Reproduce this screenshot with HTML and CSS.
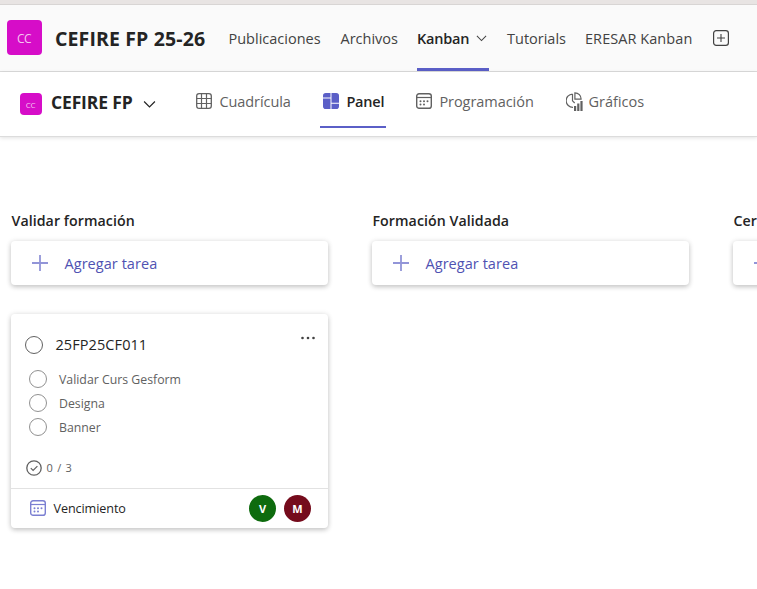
FILE: index.html
```html
<!DOCTYPE html>
<html lang="es">
<head>
<meta charset="utf-8">
<title>CEFIRE FP 25-26</title>
<link rel="stylesheet" href="styles.css">
</head>
<body>
<svg width="0" height="0" class="defs">
  <symbol id="chevron" viewBox="0 0 12 12"><path d="M1 3.2l5 5 5-5" fill="none" stroke="currentColor" stroke-width="1.1"/></symbol>
  <symbol id="calendar" viewBox="0 0 16 16">
    <rect x=".7" y=".7" width="14.6" height="14.6" rx="2.4" fill="none" stroke="currentColor" stroke-width="1.4"/>
    <path d="M.6 4.5h14.8" stroke="currentColor" stroke-width="1.2"/>
    <g fill="currentColor"><circle cx="4.5" cy="8.2" r="1"/><circle cx="8" cy="8.2" r="1"/><circle cx="11.5" cy="8.2" r="1"/><circle cx="4.5" cy="11.4" r="1"/><circle cx="8" cy="11.4" r="1"/></g>
  </symbol>
  <symbol id="plus" viewBox="0 0 16 16"><path d="M8 0v16M0 8h16" stroke="currentColor" stroke-width="1.8"/></symbol>
</svg>
<div class="strip"></div>
<header class="team">
  <div class="logo">CC</div>
  <h1>CEFIRE FP 25-26</h1>
  <nav class="tabs">
    <a class="t-pub">Publicaciones</a>
    <a class="t-arc">Archivos</a>
    <a class="t-kan active"><span>Kanban</span><svg class="chev-s"><use href="#chevron"/></svg></a>
    <a class="t-tut">Tutorials</a>
    <a class="t-ere">ERESAR Kanban</a>
  </nav>
  <svg class="add-tab" viewBox="0 0 16 16"><rect x=".6" y=".6" width="14.8" height="14.8" rx="2.6" fill="none" stroke="currentColor" stroke-width="1.2"/><path d="M8 4v8M4 8h8" stroke="currentColor" stroke-width="1.1"/></svg>
</header>
<section class="plan">
  <div class="logo small">CC</div>
  <h2>CEFIRE FP</h2>
  <svg class="chev"><use href="#chevron"/></svg>
  <nav class="views">
    <a class="v-grid"><svg viewBox="0 0 16 16"><rect x=".7" y=".7" width="14.6" height="14.6" rx="2.4" fill="none" stroke="currentColor" stroke-width="1.3"/><path d="M5.5.6v14.8M10.5.6v14.8M.6 5.5h14.8M.6 10.5h14.8" stroke="currentColor" stroke-width="1.2"/></svg><span>Cuadrícula</span></a>
    <a class="v-board active"><svg viewBox="0 0 16 16"><path d="M2.8 0H7.5V4.6H0V2.8A2.8 2.8 0 0 1 2.8 0zM0 5.6H7.5V16H2.8A2.8 2.8 0 0 1 0 13.2zM8.5 0h4.7A2.8 2.8 0 0 1 16 2.8V9.8H8.5zM8.5 10.8H16v2.4a2.8 2.8 0 0 1-2.8 2.8H8.5z" fill="currentColor"/></svg><span>Panel</span></a>
    <a class="v-cal"><svg><use href="#calendar"/></svg><span>Programación</span></a>
    <a class="v-chart"><svg viewBox="0 0 17 19"><path d="M6.5 2.1A6.6 6.6 0 0 0 7 15.3M6.5 2v6.8l2.2 2.2M8.9.8a6.2 6.2 0 0 1 6.2 6.4H8.9z" fill="none" stroke="currentColor" stroke-width="1.2"/><path d="M8 14h2.2v5H8zM11.2 11.5h2.2V19h-2.2zM14.4 9h2.2v10h-2.2z" fill="currentColor"/></svg><span>Gráficos</span></a>
  </nav>
</section>
<main class="board">
  <section class="bucket">
    <h3>Validar formación</h3>
    <button class="add"><svg><use href="#plus"/></svg><span>Agregar tarea</span></button>
    <article class="card">
      <div class="top"><i class="ring main"></i><span class="name">25FP25CF011</span>
        <svg class="more" viewBox="0 0 14 4"><g fill="currentColor"><circle cx="1.5" cy="2" r="1.3"/><circle cx="7" cy="2" r="1.3"/><circle cx="12.5" cy="2" r="1.3"/></g></svg></div>
      <ul>
        <li><i class="ring"></i><span>Validar Curs Gesform</span></li>
        <li><i class="ring"></i><span>Designa</span></li>
        <li><i class="ring"></i><span>Banner</span></li>
      </ul>
      <div class="progress"><svg viewBox="0 0 16 16" fill="none" stroke="currentColor"><circle cx="8" cy="8" r="7.2" stroke-width="1.3"/><path d="M4.8 8.2l2.3 2.3 4.3-4.3" stroke-width="1.2"/></svg><span>0 / 3</span></div>
      <footer><svg><use href="#calendar"/></svg><span class="due">Vencimiento</span><b class="avatar green">V</b><b class="avatar red">M</b></footer>
    </article>
  </section>
  <section class="bucket">
    <h3>Formación Validada</h3>
    <button class="add"><svg><use href="#plus"/></svg><span>Agregar tarea</span></button>
  </section>
  <section class="bucket">
    <h3>Cer</h3>
    <button class="add"><svg><use href="#plus"/></svg></button>
  </section>
</main>
</body>
</html>
```
FILE: styles.css
```css
* { box-sizing: border-box; }
html { overflow: hidden; }
body { margin: 0; width: 757px; height: 589px; overflow: hidden; background: #fff; color: #242424; font-family: "Open Sans", "Noto Sans", sans-serif; font-size: 14.5px; white-space: nowrap; display: flex; flex-direction: column; }
.defs { position: absolute; }
h1, h2, h3, ul { margin: 0; padding: 0; }
svg { display: block; flex: none; width: 16px; height: 16px; }
.strip { flex: none; height: 5px; background: #e8e4e3; border-bottom: 1px solid #d8d5d4; }
.team { flex: none; height: 67px; background: #fafafa; border-bottom: 1px solid #dcdcdc; display: flex; align-items: center; padding-left: 7px; }
.logo { flex: none; width: 35px; height: 35px; border-radius: 4px; background: #d60dc8; color: #f5c4f0; font-size: 12px; letter-spacing: -.6px; display: flex; align-items: center; justify-content: center; padding: 1px 1px 0 0; margin-bottom: 1px; }
.logo.small { width: 22px; height: 22px; font-size: 8px; letter-spacing: -.3px; }
h1 { font-size: 19.5px; font-weight: 700; line-height: 26px; letter-spacing: .13px; margin-left: 13px; padding-top: 1px; width: 173.5px; }
.tabs { display: flex; height: 66px; color: #424242; }
.tabs a { display: flex; align-items: center; padding-top: 1px; height: 66px; }
.t-pub { width: 112px; }
.t-arc { width: 76.5px; }
.tabs .t-kan { width: 72px; justify-content: space-between; }
.t-tut { width: 78px; margin-left: 18px; }
.t-ere { width: 128px; letter-spacing: .06px; }
.tabs .active { color: #242424; font-weight: 600; letter-spacing: -.2px; background: linear-gradient(#5b5fc7, #5b5fc7) left bottom / 100% 3px no-repeat; }
.chev-s { width: 11px; height: 11px; margin-right: 2px; color: #424242; }
.add-tab { color: #424242; margin-bottom: 1px; }
.plan { flex: none; height: 65px; border-bottom: 1px solid #dcdcdc; box-shadow: 0 1px 4px rgba(0,0,0,.12); display: flex; align-items: center; padding-left: 20px; }
h2 { font-size: 17.5px; font-weight: 700; line-height: 24px; letter-spacing: -.15px; margin-left: 9px; width: 92px; margin-bottom: 4px; }
.chev { width: 13px; height: 13px; }
.views { display: flex; color: #616161; margin-left: 39px; height: 56px; align-self: flex-start; }
.views a { display: flex; align-items: center; padding-top: 2px; height: 56px; }
.views svg { margin-right: 7.4px; }
.v-grid { width: 125px; padding-left: 1px; }
.v-grid span { letter-spacing: -.07px; }
.views .v-board { width: 66px; padding-left: 3px; background: linear-gradient(#5b5fc7, #5b5fc7) left bottom / 100% 2px no-repeat; }
.v-board svg { color: #5b5fc7; }
.v-board span { color: #242424; font-weight: 600; letter-spacing: -.2px; }
.v-cal { width: 150px; margin-left: 30px; }
.v-cal span { letter-spacing: -.05px; }
.views .v-chart svg { width: 17px; height: 19px; margin-right: 5.5px; }
.board { display: flex; gap: 44px; padding: 74px 0 0 11px; overflow: hidden; flex: 1; }
.bucket { width: 317px; flex: none; }
.bucket:last-child { flex: 0 1 auto; min-width: 0; overflow: visible; }
h3 { font-size: 14.2px; font-weight: 600; line-height: 20px; margin-bottom: 10px; padding-left: .5px; letter-spacing: .06px; }
.add { width: 317px; height: 44px; border: 0; border-radius: 4px; background: #fff; box-shadow: 0 2px 5px rgba(0,0,0,.2), 0 0 6px rgba(0,0,0,.08); display: flex; align-items: center; padding: 0 0 0 21px; font: inherit; color: #4f52b2; }
.add span { letter-spacing: .05px; }
.add svg { margin-right: 16.5px; color: #9295d8; }
.card { width: 317px; height: 214px; margin-top: 29px; border-radius: 4px; box-shadow: 0 2px 5px rgba(0,0,0,.2), 0 0 6px rgba(0,0,0,.08); display: flex; flex-direction: column; }
.top { display: flex; align-items: center; height: 24px; margin: 19px 13px 0 14px; }
.ring { width: 18px; height: 18px; border: 1px solid #919191; border-radius: 50%; flex: none; }
.ring.main { border: 1.3px solid #616161; }
.name { margin-left: 12.5px; margin-bottom: 2px; letter-spacing: .08px; }
.more { width: 14px; height: 4px; margin: 0 0 14px auto; color: #424242; }
ul { list-style: none; margin: 10px 0 0 18px; }
li { height: 24px; display: flex; align-items: center; gap: 12px; color: #616161; font-size: 12.3px; }
.progress { display: flex; align-items: center; gap: 4.5px; height: 20px; margin: 19px 0 0 15px; color: #616161; font-size: 11px; }
.progress span { word-spacing: 1.5px; margin-bottom: 2px; }
footer { height: 40px; margin-top: auto; border-top: 1px solid #e2e2e2; display: flex; align-items: center; padding: 0 17px 0 19px; font-size: 12.6px; }
footer svg { color: #7b7fd2; margin-right: 7.5px; margin-bottom: 2px; }
.due { margin-right: auto; letter-spacing: -.08px; }
.avatar { width: 27px; height: 27px; border-radius: 50%; color: #fff; font-size: 11px; display: flex; align-items: center; justify-content: center; }
.green { background: #0e6b0e; margin-right: 8px; }
.red { background: #750b1c; }
```
